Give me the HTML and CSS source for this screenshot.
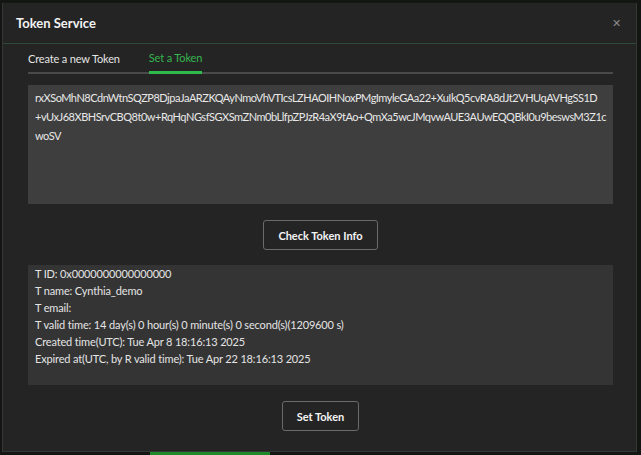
FILE: index.html
```html
<!DOCTYPE html>
<html lang="en">
<head>
  <meta charset="UTF-8">
  <title>Token Service</title>
  <meta name="viewport" content="width=device-width, initial-scale=1.0"/>
  <link rel="stylesheet" href="styles.css">
</head>
<body>
  <div class="backdrop-bar"></div>
  <div class="dialog">
    <div class="dialog-header">
      <h2>Token Service</h2>
      <span class="close">&#x2715;</span>
    </div>
    <div class="dialog-body">
      <div class="tabs">
        <div class="tab">Create a new Token</div>
        <div class="tab active">Set a Token</div>
      </div>
      <div class="token-input">rxXSoMhN8CdnWtnSQZP8DjpaJaARZKQAyNmoVhVTIcsLZHAOIHNoxPMgImyleGAa22+XuIkQ5cvRA8dJt2VHUqAVHgSS1D<br>+vUxJ68XBHSrvCBQ8t0w+RqHqNGsfSGXSmZNm0bLlfpZPJzR4aX9tAo+QmXa5wcJMqvwAUE3AUwEQQBkI0u9beswsM3Z1c<br>woSV</div>
      <div class="actions"><button>Check Token Info</button></div>
      <div class="info">
        <div>T ID: 0x0000000000000000</div>
        <div>T name: Cynthia_demo</div>
        <div>T email:</div>
        <div>T valid time: 14 day(s) 0 hour(s) 0 minute(s) 0 second(s)(1209600 s)</div>
        <div>Created time(UTC): Tue Apr 8 18:16:13 2025</div>
        <div>Expired at(UTC, by R valid time): Tue Apr 22 18:16:13 2025</div>
      </div>
      <div class="actions"><button>Set Token</button></div>
    </div>
  </div>
</body>
</html>
```

FILE: styles.css
```css
body {
  margin: 0;
  background: #141614;
  font-family: Lato, 'Noto Sans', sans-serif;
  color: #e4e4e4;
  height: 455px;
  overflow: hidden;
  position: relative;
}
.backdrop-bar {
  position: absolute;
  left: 150px;
  bottom: 0;
  width: 120px;
  height: 3px;
  background: #1f8a2a;
}
.dialog {
  position: relative;
  margin: 3px 4px 0 2px;
  height: 448px;
  background: #242424;
  border-left: 1px solid #363636;
  border-right: 1px solid #363636;
  border-bottom: 1px solid #363636;
}
.dialog-header {
  height: 40px;
  display: flex;
  align-items: center;
  justify-content: space-between;
  padding: 0 15px 0 13px;
  border-bottom: 1px solid #2c4a3a;
}
.dialog-header h2 {
  margin: 0;
  font-size: 13px;
  font-weight: bold;
  color: #f2f2f2;
}
.close {
  color: #8a8a8a;
  font-size: 11px;
}
.dialog-body {
  padding: 0 23px 0 25px;
}
.tabs {
  display: flex;
  gap: 29px;
  height: 28px;
  border-bottom: 2px solid #4a4a4a;
}
.tab {
  font-size: 11px;
  letter-spacing: -0.15px;
  line-height: 30px;
  color: #e4e4e4;
  margin-bottom: -2px;
}
.tab.active {
  color: #35b54f;
  border-bottom: 3px solid #2dbb4c;
  line-height: 27px;
}
.token-input {
  margin-top: 11px;
  height: 119px;
  box-sizing: border-box;
  background: #3e3e3e;
  padding: 3px 10px 0 7px;
  font-size: 11px;
  letter-spacing: -0.48px;
  line-height: 19px;
  white-space: nowrap;
  overflow: hidden;
  color: #e8e8e8;
}
.actions {
  display: flex;
  justify-content: center;
  margin: 16px 0 15px;
}
button {
  background: transparent;
  border: 1px solid #6a6a6a;
  border-radius: 3px;
  color: #f4f4f4;
  font-family: inherit;
  font-size: 11px;
  font-weight: bold;
  height: 30px;
  padding: 0 14px;
}
.info {
  height: 120px;
  box-sizing: border-box;
  background: #343434;
  padding: 0 7px;
  font-size: 11px;
  letter-spacing: -0.15px;
  line-height: 17px;
  color: #e4e4e4;
}
```
